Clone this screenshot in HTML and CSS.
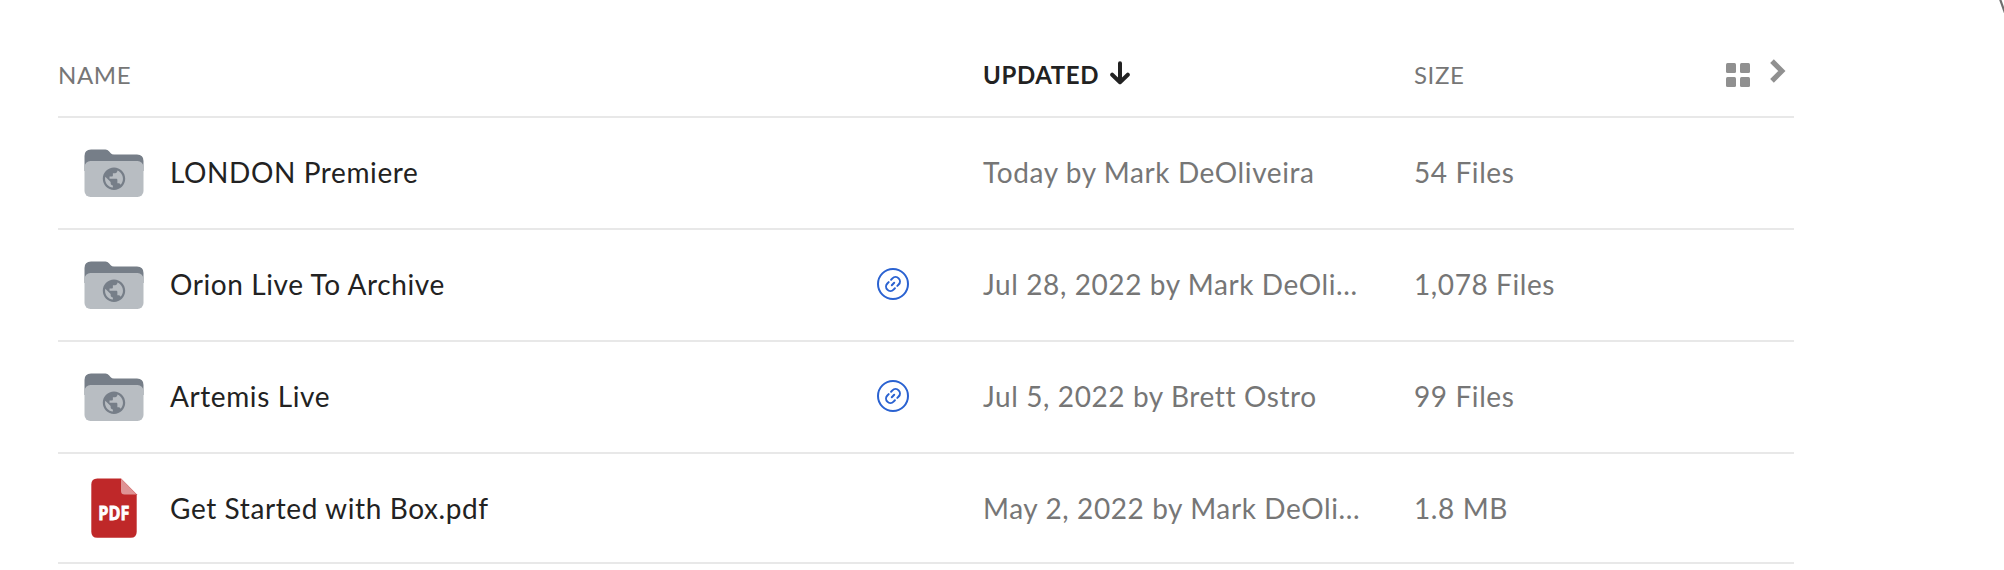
FILE: index.html
```html
<!DOCTYPE html>
<html lang="en">
<head>
<meta charset="utf-8">
<title>Files</title>
<link rel="stylesheet" href="styles.css">
</head>
<body>
<svg class="symbols" aria-hidden="true">
  <symbol id="folder" viewBox="0 0 64 64">
    <path fill="#767e88" d="M2.500 30V15Q2.500 8.500 9 8.500H23.500Q25.600 8.500 27 10.200L28.500 12Q29.800 13.500 32 13.500H55Q61.500 13.500 61.500 20V30Z"/>
    <rect fill="#b8bdc2" x="2.500" y="20" width="59" height="36" rx="6"/>
    <path fill="#767e88" transform="translate(18.560 24.300) scale(1.120)" d="M12 2C6.480 2 2 6.480 2 12s4.480 10 10 10 10-4.480 10-10S17.520 2 12 2zm-1 17.930c-3.950-.49-7-3.850-7-7.930 0-.62.080-1.210.21-1.790L9 15v1c0 1.100.9 2 2 2v1.930zm6.900-2.540c-.26-.81-1-1.390-1.900-1.390h-1v-3c0-.55-.45-1-1-1H8v-2h2c.55 0 1-.45 1-1V7h2c1.100 0 2-.9 2-2v-.41c2.930 1.190 5 4.060 5 7.410 0 2.080-.8 3.970-2.100 5.390z"/>
  </symbol>
  <symbol id="link" viewBox="0 0 32 32">
    <g fill="none" stroke="#2a62d1" stroke-linecap="round">
      <circle cx="16" cy="16" r="15" stroke-width="2"/>
      <g stroke-width="2" transform="rotate(-45 16 16)">
        <path d="M14.300 11.600H12.400A4.400 4.400 0 0 0 12.400 20.400H14.300"/>
        <path d="M17.700 11.600H19.600A4.400 4.400 0 0 1 19.600 20.400H17.700"/>
        <path d="M14.300 16H17.700"/>
      </g>
    </g>
  </symbol>
</svg>
<main class="files">
  <div class="row head">
    <span class="label">NAME</span>
    <span></span>
    <span class="label sorted">UPDATED
      <svg class="arrow" width="20" height="24" viewBox="0 0 20 24"><path d="M10 2.200V20M2.200 13.700L10 21.200L17.800 13.700" fill="none" stroke="#222" stroke-width="4" stroke-linecap="round" stroke-linejoin="round"/></svg>
    </span>
    <span class="label">SIZE</span>
    <span class="tools">
      <svg width="24" height="24" viewBox="0 0 24 24" fill="#909090"><rect width="10" height="10" rx="1.500"/><rect x="14" width="10" height="10" rx="1.500"/><rect y="14" width="10" height="10" rx="1.500"/><rect x="14" y="14" width="10" height="10" rx="1.500"/></svg>
      <svg class="chevron" width="16" height="24" viewBox="0 0 16 24"><path d="M2 2.200L11.800 12L2 21.800" fill="none" stroke="#909090" stroke-width="5.200"/></svg>
    </span>
  </div>
  <div class="row">
    <div class="name"><svg class="icon"><use href="#folder"/></svg><span class="text">LONDON Premiere</span></div>
    <span></span>
    <span class="text meta">Today by Mark DeOliveira</span>
    <span class="text meta">54 Files</span>
  </div>
  <div class="row">
    <div class="name"><svg class="icon"><use href="#folder"/></svg><span class="text">Orion Live To Archive</span></div>
    <svg class="shared"><use href="#link"/></svg>
    <span class="text meta">Jul 28, 2022 by Mark DeOli...</span>
    <span class="text meta">1,078 Files</span>
  </div>
  <div class="row">
    <div class="name"><svg class="icon"><use href="#folder"/></svg><span class="text">Artemis Live</span></div>
    <svg class="shared"><use href="#link"/></svg>
    <span class="text meta">Jul 5, 2022 by Brett Ostro</span>
    <span class="text meta">99 Files</span>
  </div>
  <div class="row last">
    <div class="name">
      <svg class="icon" viewBox="0 0 64 64">
        <path fill="#bf2829" d="M15.300 2.500H39L54.700 18.200V55.700Q54.700 61.700 48.700 61.700H15.300Q9.300 61.700 9.300 55.700V8.500Q9.300 2.500 15.300 2.500Z"/>
        <path fill="#df9394" d="M39 2.500L54.700 18.500H42.500Q39 18.500 39 15Z"/>
        <text class="filetype" x="16.300" y="44" textLength="31" lengthAdjust="spacingAndGlyphs">PDF</text>
      </svg>
      <span class="text">Get Started with Box.pdf</span>
    </div>
    <span></span>
    <span class="text meta">May 2, 2022 by Mark DeOli...</span>
    <span class="text meta">1.8 MB</span>
  </div>
</main>
<svg class="edge" width="5" height="13" viewBox="0 0 5 13"><path d="M1-1L6 13" stroke="#6f6f6f" stroke-width="2.200"/></svg>
</body>
</html>
```
FILE: styles.css
```css
* { box-sizing: border-box; }
body {
  margin: 0;
  height: 570px;
  overflow: hidden;
  background: #fff;
  color: #222;
  font-family: Lato, sans-serif;
  font-size: 28px;
  letter-spacing: 0.6px;
}
svg { display: block; flex: none; }
.symbols { position: absolute; width: 0; height: 0; }
.files { width: 1736px; margin-left: 58px; padding-top: 34px; }
.row {
  display: grid;
  grid-template-columns: 819px 106px 431px 1fr auto;
  align-items: center;
  height: 112px;
  border-bottom: 2px solid #e8e8e8;
  white-space: nowrap;
}
.head { height: 84px; }
.last { height: 110px; }
.label { display: flex; align-items: center; padding-bottom: 2px; color: #767676; font-size: 24px; }
.sorted { color: #222; font-weight: 700; }
.arrow { margin-left: 11px; margin-top: -2px; }
.tools { display: flex; gap: 20px; padding-right: 8px; }
.chevron { margin-top: -4px; }
.name { display: flex; align-items: center; padding-left: 24px; gap: 24px; }
.icon { width: 64px; height: 64px; }
.shared { width: 32px; height: 32px; margin-bottom: 2px; }
.text { padding-bottom: 2px; }
.last .text { padding-bottom: 0; }
.meta { color: #767676; }
.filetype {
  fill: #fff;
  stroke: #fff;
  stroke-width: 0.8px;
  font: 700 20px "Open Sans", sans-serif;
  letter-spacing: 0;
}
.edge { position: absolute; top: 0; right: 0; }
```
